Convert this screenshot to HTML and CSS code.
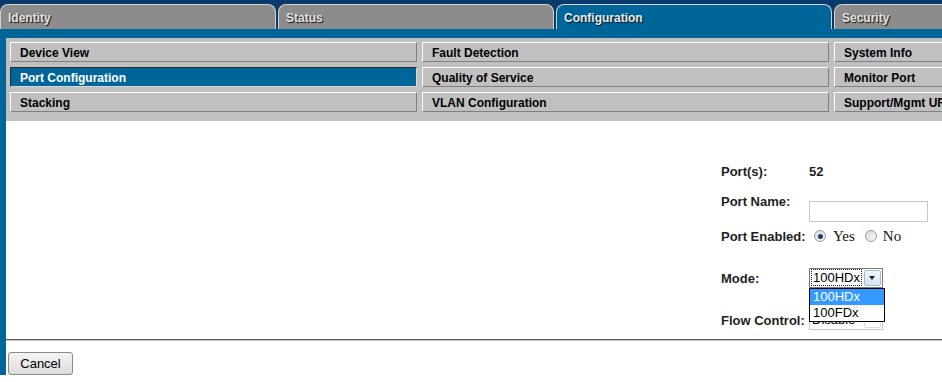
FILE: index.html
```html
<!DOCTYPE html>
<html>
<head>
    <meta charset="UTF-8">
    <title>Port Configuration</title>
    <link rel="stylesheet" href="styles.css">
</head>
<body>
    <div id="page">
        <div id="tab-bar">
            <div class="tab">Identity</div>
            <div class="tab">Status</div>
            <div class="tab active">Configuration</div>
            <div class="tab">Security</div>
        </div>
        <div id="tab-band"></div>
        <div id="main">
            <div id="submenu">
                <div class="menu-button">Device View</div>
                <div class="menu-button">Fault Detection</div>
                <div class="menu-button">System Info</div>
                <div class="menu-button active">Port Configuration</div>
                <div class="menu-button">Quality of Service</div>
                <div class="menu-button">Monitor Port</div>
                <div class="menu-button">Stacking</div>
                <div class="menu-button">VLAN Configuration</div>
                <div class="menu-button">Support/Mgmt URLs</div>
            </div>
            <div id="form-container">
                <div class="form-row row-ports">
                    <span class="label">Port(s):</span>
                    <span class="value">52</span>
                </div>
                <div class="form-row row-name">
                    <span class="label">Port Name:</span>
                    <input class="text-input" type="text">
                </div>
                <div class="form-row row-enabled">
                    <span class="label">Port Enabled:</span>
                    <span class="radio checked"></span><span class="radio-text">Yes</span>
                    <span class="radio second"></span><span class="radio-text">No</span>
                </div>
                <div class="form-row row-mode">
                    <span class="label">Mode:</span>
                    <div class="select open">
                        <span class="select-text"><span class="focus">100HDx</span></span>
                        <span class="select-arrow"></span>
                        <div class="select-list">
                            <div class="option selected">100HDx</div>
                            <div class="option">100FDx</div>
                        </div>
                    </div>
                </div>
                <div class="form-row row-flow">
                    <span class="label">Flow Control:</span>
                    <div class="select">
                        <span class="select-text">Disable</span>
                        <span class="select-arrow"></span>
                    </div>
                </div>
            </div>
            <div id="divider"></div>
            <div id="actions">
                <button class="cancel-button">Cancel</button>
            </div>
        </div>
    </div>
</body>
</html>
```

FILE: styles.css
```css
body {
    margin: 0;
    width: 942px;
    height: 382px;
    overflow: hidden;
    background-color: #fff;
    font-family: "Liberation Sans", Arial, sans-serif;
}

#page {
    width: 1250px;
}

#tab-bar {
    display: flex;
    gap: 2px;
    padding-top: 4px;
    background-color: #0a3a6c;
}

.tab {
    box-sizing: border-box;
    flex: 0 0 276px;
    height: 25px;
    padding: 1px 0 0 7px;
    background-color: #8c8c8c;
    border: 1px solid #d2d2d2;
    border-bottom: none;
    border-radius: 8px 8px 0 0;
    color: #e2e2e2;
    font-size: 12px;
    font-weight: bold;
    line-height: 24px;
    text-shadow: 1px 1px 1px #111;
}

.tab.active {
    background-color: #006699;
    color: #e6edf3;
}

#tab-band {
    height: 9px;
    background-color: #006699;
}

#main {
    border-left: 6px solid #006699;
}

#submenu {
    display: grid;
    grid-template-columns: 407px 407px 407px;
    grid-auto-rows: 20px;
    column-gap: 5px;
    row-gap: 5px;
    padding: 4px 0 9px 4px;
    background-color: #c0c0c0;
}

.menu-button {
    box-sizing: border-box;
    padding: 1px 0 0 9px;
    border: 1px solid;
    border-color: #fff #808080 #808080 #fff;
    color: #000;
    font-size: 12px;
    font-weight: bold;
    line-height: 18px;
    white-space: nowrap;
    overflow: hidden;
}

.menu-button.active {
    background-color: #006699;
    border-color: #2a2a2a #d8d8d8 #d8d8d8 #2a2a2a;
    color: #fff;
}

#form-container {
    padding: 41px 0 9px 715px;
}

.form-row {
    display: flex;
    align-items: center;
    color: #1e1e1e;
    font-size: 13px;
    font-weight: bold;
}

.label {
    flex: 0 0 88px;
    white-space: nowrap;
}

.row-ports {
    height: 18px;
}

.row-name {
    margin-top: 13px;
    height: 30px;
    align-items: flex-start;
}

.row-name .label {
    line-height: 18px;
}

.text-input {
    box-sizing: border-box;
    width: 119px;
    height: 21px;
    margin: 8px 0 0 0;
    padding: 0;
    border: 1px solid #c8c8c8;
}

.row-enabled {
    margin-top: 4px;
    height: 18px;
}

.radio {
    box-sizing: border-box;
    display: inline-flex;
    align-items: center;
    justify-content: center;
    width: 12px;
    height: 12px;
    margin: 0 7px 0 5px;
    border: 1px solid #9a9a9a;
    border-radius: 50%;
    background: linear-gradient(135deg, #d8d8d8, #fafafa);
}

.radio.second {
    margin: 0 6px 0 10px;
}

.radio.checked::after {
    content: "";
    width: 5px;
    height: 5px;
    border-radius: 50%;
    background-color: #1c3d6e;
}

.radio-text {
    font-family: "Liberation Serif", "Times New Roman", serif;
    font-size: 15px;
    font-weight: normal;
    color: #111;
}

.row-mode {
    margin-top: 23px;
    height: 20px;
}

.row-flow {
    margin-top: 22px;
    height: 20px;
}

.select {
    box-sizing: border-box;
    position: relative;
    display: flex;
    align-items: center;
    width: 74px;
    height: 20px;
    border: 1px solid #7a7a7a;
    background-color: #fff;
    font-size: 13px;
    font-weight: normal;
    color: #000;
}

.row-flow .select {
    border-color: #c8c8c8;
}

.select-text {
    flex: 1;
    padding-left: 2px;
    line-height: 16px;
}

.focus {
    outline: 1px dotted #222;
    padding: 0 1px;
}

.select-arrow {
    box-sizing: border-box;
    position: relative;
    width: 17px;
    height: 16px;
    margin-right: 1px;
    border: 1px solid #a8bcd0;
    border-radius: 2px;
    background: linear-gradient(#f2f7fc, #d4e4f4);
}

.select-arrow::after {
    content: "";
    position: absolute;
    left: 4px;
    top: 5px;
    border-left: 3.5px solid transparent;
    border-right: 3.5px solid transparent;
    border-top: 4px solid #222;
}

.row-flow .select-arrow {
    border-color: #ddd;
    background: #fff;
}

.select-list {
    box-sizing: border-box;
    position: absolute;
    top: 19px;
    left: -1px;
    width: 76px;
    z-index: 2;
    border: 1px solid #000;
    background-color: #fff;
}

.option {
    height: 16px;
    padding-left: 3px;
    line-height: 16px;
    font-size: 13px;
}

.option.selected {
    background-color: #3399ff;
    color: #fff;
}

#divider {
    height: 1px;
    border-top: 1px solid #5a5a5a;
    background-color: #c8c8c8;
}

#actions {
    padding: 11px 0 0 2px;
}

.cancel-button {
    width: 65px;
    height: 23px;
    padding: 0;
    border: 1px solid #8a8a8a;
    border-radius: 3px;
    background: linear-gradient(#f4f4f4, #dcdcdc);
    color: #000;
    font-family: "Liberation Sans", Arial, sans-serif;
    font-size: 13px;
}
```
